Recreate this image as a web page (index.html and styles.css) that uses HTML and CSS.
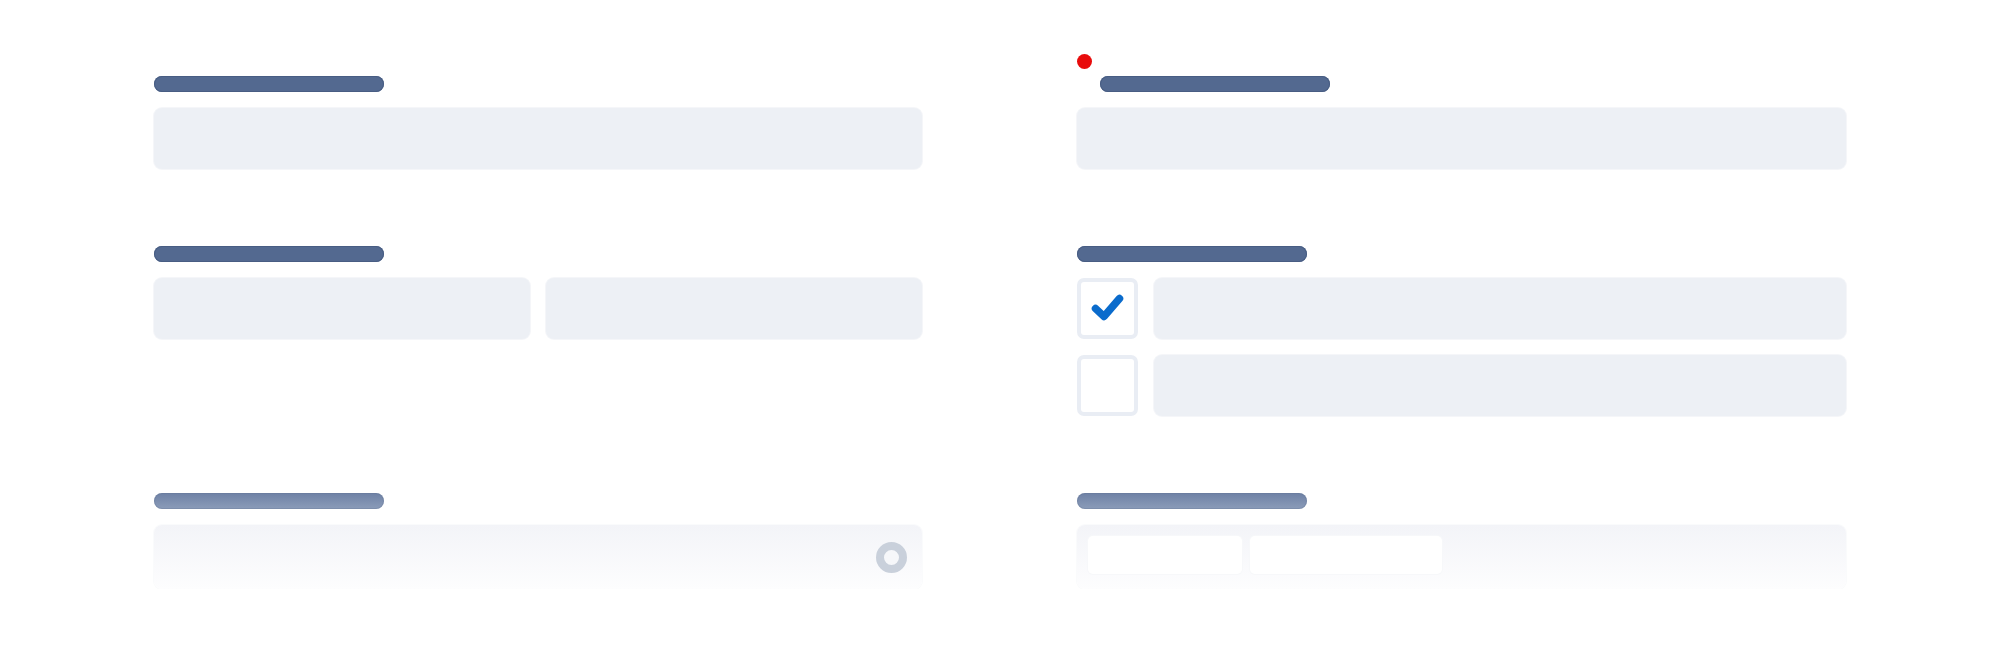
FILE: index.html
```html
<!DOCTYPE html>
<html lang="en">
<head>
<meta charset="utf-8">
<title>Form skeleton</title>
<link rel="stylesheet" href="styles.css">
</head>
<body>
<main class="form">
  <section class="field">
    <div class="label"></div>
    <div class="input"></div>
  </section>
  <section class="field field-flagged">
    <span class="flag-dot"></span>
    <div class="label label-indented"></div>
    <div class="input"></div>
  </section>

  <section class="field">
    <div class="label"></div>
    <div class="pair">
      <div class="input"></div>
      <div class="input"></div>
    </div>
  </section>
  <section class="field">
    <div class="label"></div>
    <div class="options">
      <div class="option">
        <div class="checkbox">
          <svg class="check" width="61" height="61" viewBox="0 0 61 61"><path d="M18.5 30.5 L27 38.5 L42.5 20.5" fill="none" stroke="#0a6bcc" stroke-width="7.5" stroke-linecap="round" stroke-linejoin="round"/></svg>
        </div>
        <div class="input"></div>
      </div>
      <div class="option">
        <div class="checkbox"></div>
        <div class="input"></div>
      </div>
    </div>
  </section>

  <section class="field faded">
    <div class="label"></div>
    <div class="input input-faded input-spinner">
      <span class="spinner"></span>
    </div>
  </section>
  <section class="field faded">
    <div class="label"></div>
    <div class="input input-faded input-chips">
      <span class="chip chip-a"></span>
      <span class="chip chip-b"></span>
    </div>
  </section>
</main>
</body>
</html>
```
FILE: styles.css
```css
html, body {
  margin: 0;
  padding: 0;
  background: #ffffff;
  font-family: "Liberation Sans", Arial, sans-serif;
}

.form {
  display: grid;
  grid-template-columns: 768px 769px;
  column-gap: 155px;
  row-gap: 77px;
  padding: 76px 154px 0 154px;
}

.field {
  display: flex;
  flex-direction: column;
  gap: 16px;
  position: relative;
}

.label {
  width: 230px;
  height: 16px;
  border-radius: 8px;
  background: #536990;
  box-shadow: inset 0 0 0 1px #485d83;
}

.label-indented {
  margin-left: 23px;
}

.flag-dot {
  position: absolute;
  left: 0;
  top: -22px;
  width: 15px;
  height: 15px;
  border-radius: 50%;
  background: #e80c0c;
}

.input {
  height: 61px;
  border-radius: 8px;
  background: #edf0f5;
  box-shadow: 0 0 0 1px #f5f6f9;
}

.pair {
  display: grid;
  grid-template-columns: 1fr 1fr;
  gap: 16px;
}

.options {
  display: flex;
  flex-direction: column;
  gap: 16px;
}

.option {
  display: flex;
  gap: 16px;
}

.option .input {
  flex: 1;
}

.checkbox {
  width: 61px;
  height: 61px;
  box-sizing: border-box;
  border: 4px solid #e9edf4;
  border-radius: 7px;
  background: #ffffff;
  position: relative;
  flex: none;
}

.check {
  position: absolute;
  left: -4px;
  top: -4px;
}

.faded .label {
  background: linear-gradient(#6e81a5, #8b9cb9);
  box-shadow: inset 0 0 0 1px rgba(100, 118, 150, 0.35);
}

.input-faded {
  height: 64px;
  background: linear-gradient(#f3f4f8, #fdfdfe);
  box-shadow: 0 0 0 1px #fafbfc;
}

.input-spinner {
  display: flex;
  align-items: center;
  justify-content: flex-end;
  padding-right: 15px;
}

.spinner {
  width: 31px;
  height: 31px;
  box-sizing: border-box;
  border-radius: 50%;
  border: 8px solid #c9d0db;
  background: #f6f7fa;
}

.input-chips {
  display: flex;
  gap: 8px;
  padding: 11px;
  box-sizing: border-box;
}

.chip {
  height: 38px;
  border-radius: 5px;
  background: #ffffff;
  box-shadow: 0 0 0 1px #f7f8fa;
}

.chip-a {
  width: 154px;
}

.chip-b {
  width: 192px;
}
```
